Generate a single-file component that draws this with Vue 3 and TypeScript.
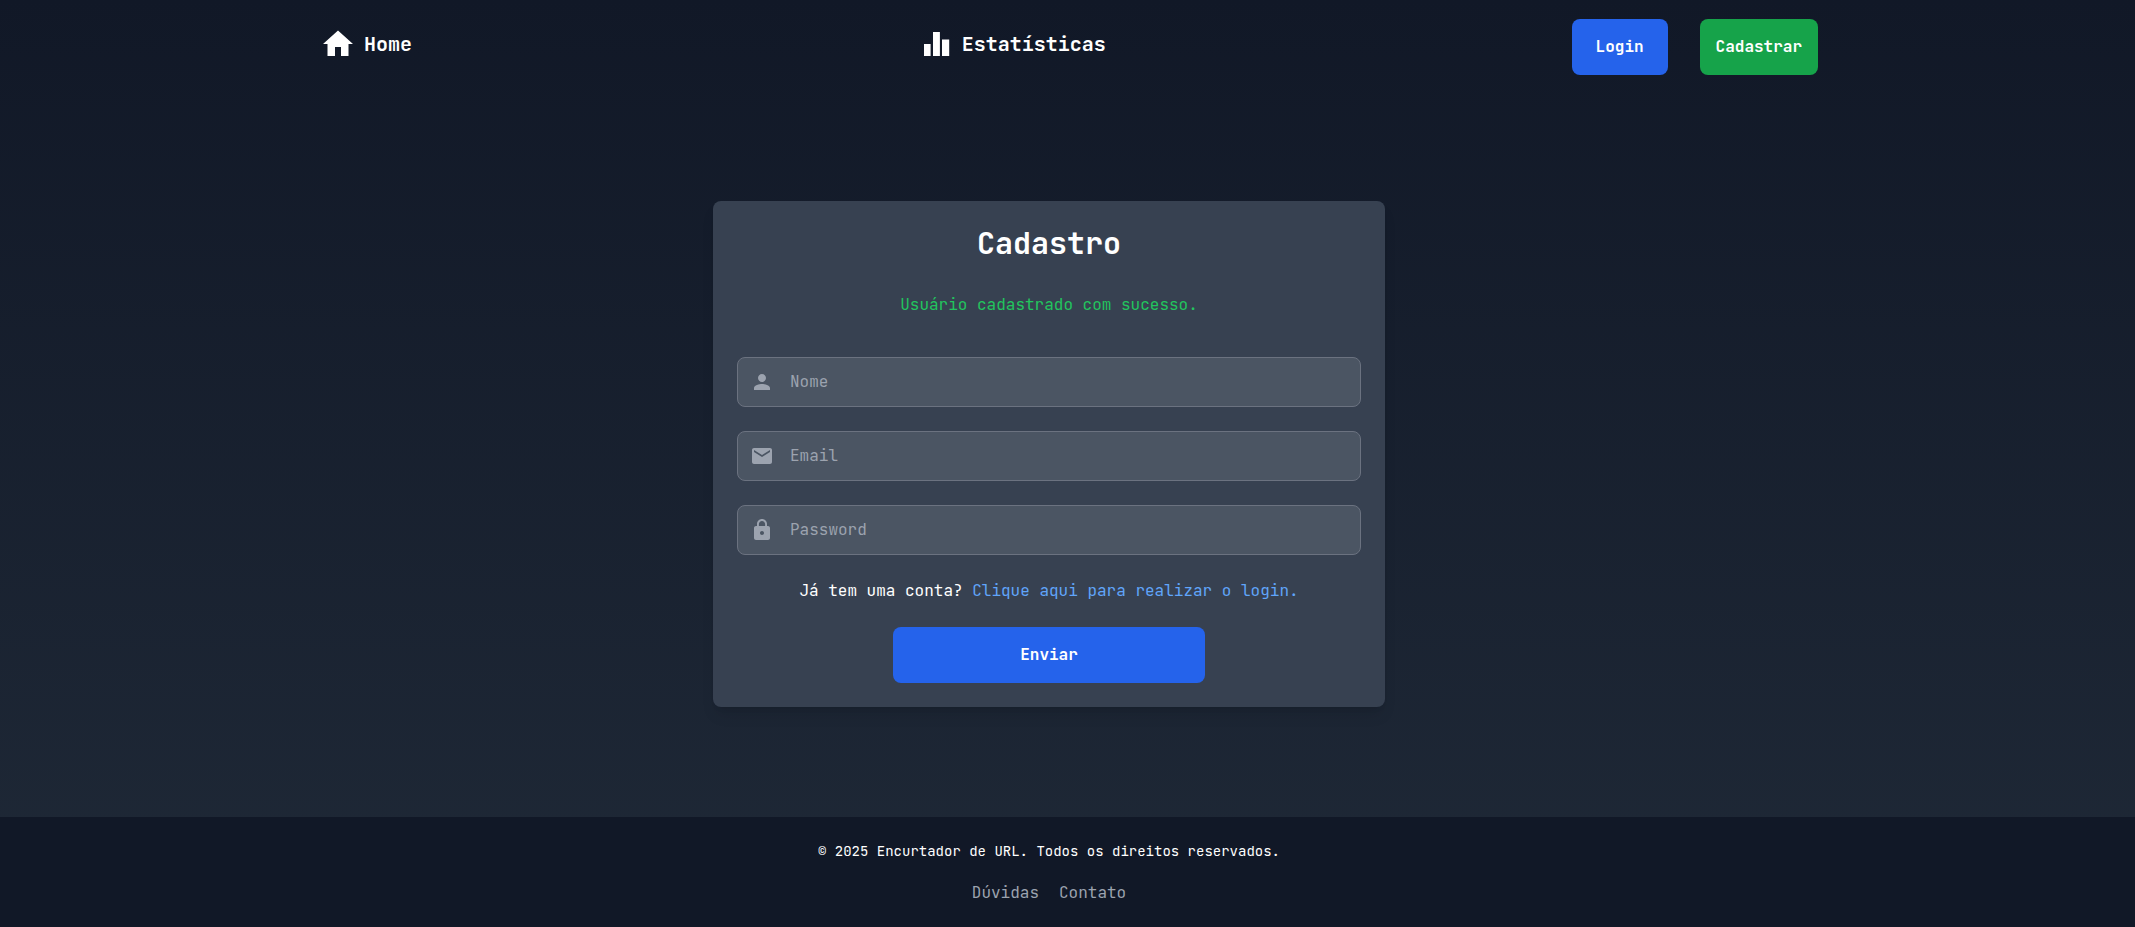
<script setup lang="ts">
import { ref } from 'vue'

interface Field {
  id: string
  type: string
  label: string
  icon: string
}

const fields: Field[] = [
  {
    id: 'name',
    type: 'text',
    label: 'Nome',
    icon: 'M12 12c2.21 0 4-1.79 4-4s-1.79-4-4-4-4 1.79-4 4 1.79 4 4 4zm0 2c-2.67 0-8 1.34-8 4v2h16v-2c0-2.66-5.33-4-8-4z',
  },
  {
    id: 'email',
    type: 'email',
    label: 'Email',
    icon: 'M20 4H4c-1.1 0-1.99.9-1.99 2L2 18c0 1.1.9 2 2 2h16c1.1 0 2-.9 2-2V6c0-1.1-.9-2-2-2zm0 4l-8 5-8-5V6l8 5 8-5v2z',
  },
  {
    id: 'password',
    type: 'password',
    label: 'Password',
    icon: 'M18 8h-1V6c0-2.76-2.24-5-5-5S7 3.24 7 6v2H6c-1.1 0-2 .9-2 2v10c0 1.1.9 2 2 2h12c1.1 0 2-.9 2-2V10c0-1.1-.9-2-2-2zm-6 9c-1.1 0-2-.9-2-2s.9-2 2-2 2 .9 2 2-.9 2-2 2zm3.1-9H8.9V6c0-1.71 1.39-3.1 3.1-3.1 1.71 0 3.1 1.39 3.1 3.1v2z',
  },
]

const values = ref<Record<string, string>>({ name: '', email: '', password: '' })
const message = ref('Usuário cadastrado com sucesso.')
</script>

<template>
  <div class="page">
    <header class="header">
      <nav class="nav">
        <a class="nav-link home" href="#home">
          <svg class="nav-icon" viewBox="0 0 24 24" aria-hidden="true"><path d="M10 20v-6h4v6h5v-8h3L12 3 2 12h3v8z" /></svg>
          <span>Home</span>
        </a>
        <a class="nav-link" href="#estatisticas">
          <svg class="nav-icon" viewBox="0 0 24 24" aria-hidden="true"><path d="M10 20h4.6V4H10zM4 20h4.4v-8H4zM16 9v11h4.8V9z" /></svg>
          <span>Estatísticas</span>
        </a>
        <div class="actions">
          <button class="button login" type="button">Login</button>
          <button class="button register" type="button">Cadastrar</button>
        </div>
      </nav>
    </header>

    <main class="main">
      <form class="card" @submit.prevent>
        <h1 class="title">Cadastro</h1>
        <p class="message" role="status">{{ message }}</p>
        <div class="fields">
          <div v-for="field in fields" :key="field.id" class="field">
            <label class="field-label" :for="field.id" :aria-label="field.label">
              <svg class="field-icon" viewBox="0 0 24 24" aria-hidden="true"><path :d="field.icon" /></svg>
            </label>
            <input :id="field.id" v-model="values[field.id]" class="input" :type="field.type" :placeholder="field.label" />
          </div>
        </div>
        <p class="hint">Já tem uma conta? <a class="hint-link" href="#login">Clique aqui para realizar o login.</a></p>
        <button class="button submit" type="submit">Enviar</button>
      </form>
    </main>

    <footer class="footer">
      <p class="copyright">© 2025 Encurtador de URL. Todos os direitos reservados.</p>
      <div class="footer-links">
        <a class="footer-link" href="#duvidas">Dúvidas</a>
        <a class="footer-link" href="#contato">Contato</a>
      </div>
    </footer>
  </div>
</template>

<style>
body {
  margin: 0;
  background: #111827;
}
</style>

<style scoped>
.page {
  box-sizing: border-box;
  display: flex;
  flex-direction: column;
  min-height: 100vh;
  background: linear-gradient(#111827, #1f2937);
  color: #fff;
  font-family: "JetBrains Mono", "DejaVu Sans Mono", monospace;
  font-size: 16px;
  line-height: 24px;
}

.page * {
  box-sizing: border-box;
}

.header {
  padding-right: 35px;
}

.main,
.footer {
  padding-right: 37px;
}

.nav {
  display: flex;
  justify-content: space-between;
  max-width: 1536px;
  margin: 0 auto;
  padding: 19px 0 15px 38px;
}

.nav-link {
  display: flex;
  align-items: center;
  gap: 8px;
  height: 50px;
  color: #fff;
  font-size: 20px;
  font-weight: 700;
  text-decoration: none;
}

.home {
  margin-right: 40px;
}

.nav-icon {
  width: 36px;
  height: 36px;
  fill: currentColor;
}

.actions {
  display: flex;
  gap: 32px;
}

.button {
  height: 56px;
  padding: 0 16px;
  border: 0;
  border-radius: 8px;
  color: #fff;
  font: inherit;
  font-weight: 700;
  cursor: pointer;
}

.login {
  width: 96px;
  background: #2563eb;
}

.register {
  background: #16a34a;
}

.main {
  display: flex;
  flex: 1;
  align-items: center;
  justify-content: center;
}

.card {
  display: flex;
  flex-direction: column;
  align-items: center;
  width: 100%;
  max-width: 672px;
  padding: 24px;
  border-radius: 8px;
  background: #374151;
  box-shadow: 0 10px 15px -3px rgb(0 0 0 / 10%), 0 4px 6px -4px rgb(0 0 0 / 10%);
}

.title {
  margin: 0;
  font-size: 30px;
  line-height: 36px;
}

.message {
  margin: 32px 0 40px;
  color: #22c55e;
}

.fields {
  display: grid;
  gap: 24px;
  width: 100%;
}

.field {
  display: flex;
  align-items: center;
  height: 50px;
  border: 1px solid #6b7280;
  border-radius: 8px;
  background: #4b5563;
}

.field-label {
  display: flex;
  padding: 0 16px 0 12px;
}

.field-icon {
  width: 24px;
  height: 24px;
  fill: #9ca3af;
}

.input {
  flex: 1;
  min-width: 0;
  height: 100%;
  padding: 0;
  border: 0;
  outline: 0;
  background: transparent;
  color: #fff;
  font: inherit;
}

.input::placeholder {
  color: #9ca3af;
  opacity: 1;
}

.hint {
  margin: 24px 0;
}

.hint-link {
  color: #60a5fa;
  text-decoration: none;
}

.submit {
  width: 50%;
  background: #2563eb;
}

.footer {
  display: flex;
  flex-direction: column;
  align-items: center;
  gap: 20px;
  padding-top: 24px;
  padding-bottom: 22px;
  background: #111827;
}

.copyright {
  margin: 0;
  font-size: 14px;
  line-height: 20px;
}

.footer-links {
  display: flex;
  gap: 20px;
}

.footer-link {
  color: #9ca3af;
  text-decoration: none;
}
</style>
